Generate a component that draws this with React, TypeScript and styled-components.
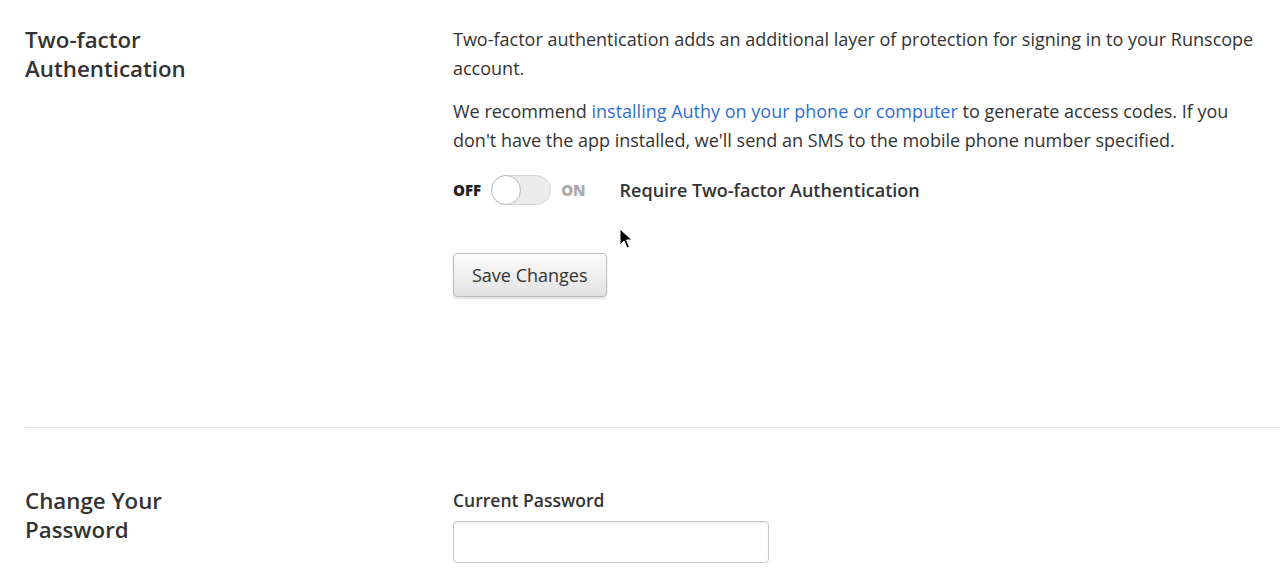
import React, {FC} from 'react';
import styled, {createGlobalStyle} from 'styled-components';

const GlobalStyle = createGlobalStyle`
  html, body {
    margin: 0;
    padding: 0;
    background: #fff;
  }
  body {
    font-family: 'Open Sans', Lato, 'Liberation Sans', sans-serif;
    color: #333;
    -webkit-font-smoothing: antialiased;
  }
`;

const Page = styled.div`
  position: relative;
  width: 1280px;
  height: 584px;
  overflow: hidden;
  padding-left: 25px;
  box-sizing: border-box;
`;

const Section = styled.section<{$top: number; $bottom: number}>`
  display: grid;
  grid-template-columns: 428px 1fr;
  padding: ${p => p.$top}px 12px ${p => p.$bottom}px 0;
`;

const Divider = styled.hr`
  margin: 0;
  border: 0;
  border-top: 1px solid #e6e6e6;
`;

const Heading = styled.h2`
  margin: 0;
  font-size: 22.3px;
  line-height: 29px;
  font-weight: 600;
  color: #333;
  width: 200px;
`;

const Body = styled.div`
  display: flex;
  flex-direction: column;
  align-items: flex-start;
`;

const Text = styled.p`
  margin: 0 0 14px;
  font-size: 18px;
  line-height: 29px;
  color: #333;
`;

const Link = styled.a`
  color: #2f6fd3;
  text-decoration: none;
`;

const ToggleRow = styled.div`
  display: flex;
  align-items: center;
  height: 30px;
  margin-top: 6px;
`;

const SwitchLabel = styled.span<{$active?: boolean}>`
  font-size: 15px;
  font-weight: 800;
  color: ${p => (p.$active ? '#222' : '#aaa')};
`;

const Track = styled.span`
  position: relative;
  width: 60px;
  height: 30px;
  margin: 0 10px;
  border-radius: 15px;
  box-sizing: border-box;
  border: 1px solid #d4d4d4;
  background: #ececec;
`;

const Knob = styled.span`
  position: absolute;
  left: -1px;
  top: -1px;
  width: 30px;
  height: 30px;
  box-sizing: border-box;
  border-radius: 50%;
  background: #fff;
  border: 1px solid #b9b9b9;
`;

const ToggleText = styled.span`
  margin-left: 34px;
  font-size: 18px;
  font-weight: 600;
  color: #333;
`;

const Button = styled.button`
  margin-top: 48px;
  height: 44px;
  padding: 0 18px;
  font-family: inherit;
  font-size: 18px;
  color: #333;
  border: 1px solid #bdbdbd;
  border-radius: 4px;
  background: linear-gradient(#fbfbfb, #e2e2e2);
  box-shadow: 0 2px 2px rgba(0, 0, 0, 0.12);
`;

const FieldLabel = styled.label`
  font-size: 17.5px;
  line-height: 29px;
  font-weight: 600;
  color: #333;
`;

const Input = styled.input`
  margin-top: 6px;
  width: 316px;
  height: 42px;
  box-sizing: border-box;
  border: 1px solid #c8c8c8;
  border-radius: 4px;
  box-shadow: inset 0 1px 2px rgba(0, 0, 0, 0.06);
`;

const Cursor = styled.svg`
  position: absolute;
  left: 619px;
  top: 228px;
`;

const Toggle: FC = () => (
  <ToggleRow>
    <SwitchLabel $active>OFF</SwitchLabel>
    <Track>
      <Knob />
    </Track>
    <SwitchLabel>ON</SwitchLabel>
    <ToggleText>Require Two-factor Authentication</ToggleText>
  </ToggleRow>
);

export default function App() {
  return (
    <Page>
      <GlobalStyle />
      <Section $top={25} $bottom={130}>
        <Heading>Two-factor Authentication</Heading>
        <Body>
          <Text>
            Two-factor authentication adds an additional layer of protection for signing in to your
            Runscope account.
          </Text>
          <Text>
            We recommend <Link href="#">installing Authy on your phone or computer</Link> to generate
            access codes. If you don't have the app installed, we'll send an SMS to the mobile phone
            number specified.
          </Text>
          <Toggle />
          <Button>Save Changes</Button>
        </Body>
      </Section>
      <Divider />
      <Section $top={58} $bottom={0}>
        <Heading>Change Your Password</Heading>
        <Body>
          <FieldLabel>Current Password</FieldLabel>
          <Input type="password" />
        </Body>
      </Section>
      <Cursor width="14" height="22" viewBox="0 0 14 22">
        <path d="M1 1 L1 17 L5 13 L8 20 L10.5 19 L7.5 12 L13 12 Z" fill="#000" stroke="#fff" strokeWidth="1" />
      </Cursor>
    </Page>
  );
}
